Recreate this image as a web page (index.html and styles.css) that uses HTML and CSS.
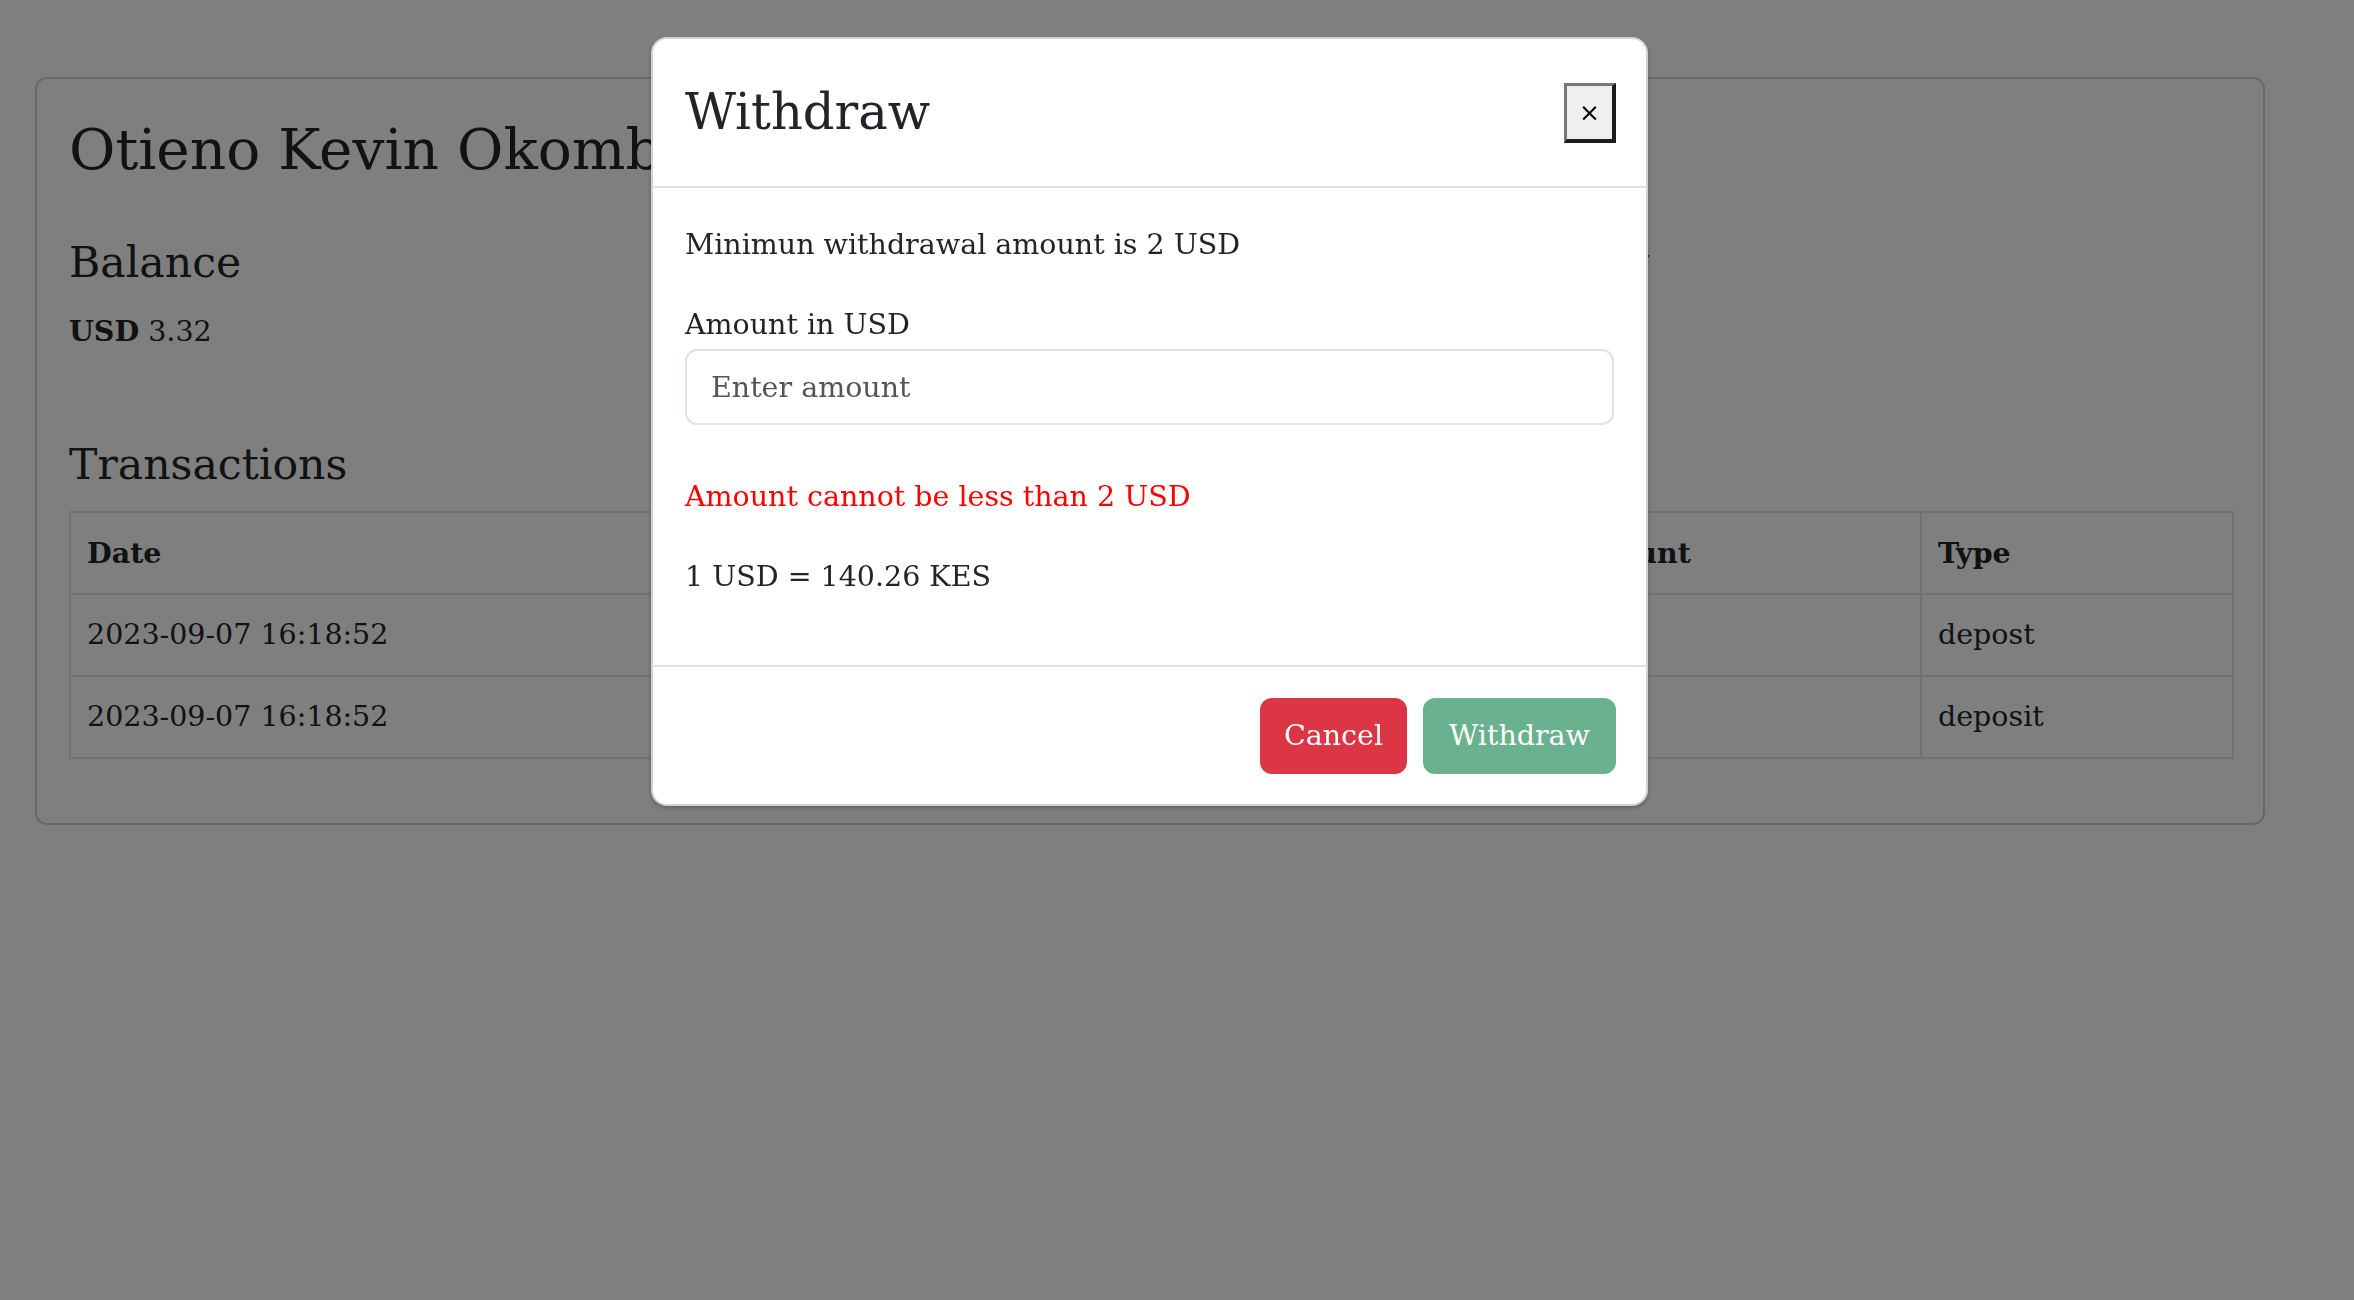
FILE: index.html
```html
<!DOCTYPE html>
<html lang="en">
<head>
<meta charset="utf-8">
<title>Wallet</title>
<link rel="stylesheet" href="styles.css">
</head>
<body>
<div class="page">
  <div class="card">
    <div class="card-body">
      <h2 class="name">Otieno Kevin Okombo</h2>
      <div class="summary">
        <div class="summary-col">
          <h4 class="section-title">Balance</h4>
          <p class="balance"><strong>USD</strong> 3.32</p>
        </div>
        <div class="summary-col summary-col-right">
          <h4 class="section-title">Withdraw money</h4>
        </div>
      </div>
      <h4 class="section-title tx-title">Transactions</h4>
      <table class="tx-table">
        <thead>
          <tr>
            <th class="c-date">Date</th>
            <th class="c-desc">Ref</th>
            <th class="c-ref">Status</th>
            <th class="c-amount">Amount</th>
            <th class="c-type">Type</th>
          </tr>
        </thead>
        <tbody>
          <tr>
            <td>2023-09-07 16:18:52</td>
            <td>R1</td>
            <td>ok</td>
            <td>1.66</td>
            <td>depost</td>
          </tr>
          <tr>
            <td>2023-09-07 16:18:52</td>
            <td>R2</td>
            <td>ok</td>
            <td>1.66</td>
            <td>deposit</td>
          </tr>
        </tbody>
      </table>
    </div>
  </div>
</div>

<div class="backdrop"></div>

<div class="modal">
  <div class="modal-header">
    <h3 class="modal-title">Withdraw</h3>
    <button class="close" type="button">×</button>
  </div>
  <div class="modal-body">
    <p class="text">Minimun withdrawal amount is 2 USD</p>
    <label class="label" for="amount">Amount in USD</label>
    <input class="input" id="amount" type="text" placeholder="Enter amount">
    <p class="text error">Amount cannot be less than 2 USD</p>
    <p class="text">1 USD = 140.26 KES</p>
  </div>
  <div class="modal-footer">
    <button class="btn btn-danger" type="button">Cancel</button>
    <button class="btn btn-success" type="button" disabled>Withdraw</button>
  </div>
</div>
</body>
</html>
```

FILE: styles.css
```css
* {
  box-sizing: border-box;
}

html, body {
  margin: 0;
  padding: 0;
}

body {
  background: #ffffff;
  color: #212529;
  font-family: "DejaVu Serif", "Liberation Serif", serif;
  font-size: 28.5px;
  line-height: 48px;
  width: 2354px;
  height: 1300px;
  overflow: hidden;
}

.page {
  padding: 77px 89px 0 35px;
}

.card {
  border: 2px solid rgba(0, 0, 0, 0.175);
  border-radius: 12px;
  background: #fff;
}

.card-body {
  padding: 32px;
}

.name {
  margin: 0 0 47px 0;
  font-size: 56.6px;
  line-height: 76px;
  font-weight: 400;
}

.summary {
  display: grid;
  grid-template-columns: 1105px 1fr;
}

.summary-col-right {
  padding-left: 108px;
}

.section-title {
  margin: 0 0 16px 0;
  font-size: 42.6px;
  line-height: 57px;
  font-weight: 400;
}

.balance {
  margin: 0 0 32px 0;
}

.balance strong {
  font-weight: 700;
}

.tx-title {
  margin-top: 48px;
  margin-bottom: 18px;
}

.tx-table {
  width: 100%;
  border-collapse: collapse;
  table-layout: fixed;
  margin-bottom: 32px;
}

.tx-table th,
.tx-table td {
  border: 2px solid #dee2e6;
  padding: 16px 16px;
  text-align: left;
  line-height: 48px;
  white-space: nowrap;
  overflow: hidden;
}

.tx-table th {
  font-weight: 700;
}

.c-date { width: 700px; }
.c-desc { width: 400px; }
.c-ref { width: 378px; }
.c-amount { width: 373px; }
.c-type { width: 312px; }

.backdrop {
  position: fixed;
  inset: 0;
  background: rgba(0, 0, 0, 0.5);
}

.modal {
  position: fixed;
  top: 37px;
  left: 651px;
  width: 997px;
  background: #fff;
  border: 2px solid rgba(0, 0, 0, 0.175);
  border-radius: 16px;
  box-shadow: 0 2px 4px rgba(0, 0, 0, 0.25);
}

.modal-header {
  display: flex;
  align-items: center;
  padding: 32px 30px 32px 32px;
  border-bottom: 2px solid #dee2e6;
}

.modal-title {
  margin: 0;
  font-size: 49.6px;
  line-height: 83px;
  font-weight: 400;
  flex: 1;
}

.close {
  width: 52px;
  height: 60px;
  padding: 0;
  background: #efefef;
  color: #000;
  border-style: solid;
  border-width: 3px 4px 4px 3px;
  border-color: #767676 #1c1c1c #1c1c1c #767676;
  border-radius: 0;
  font-family: "DejaVu Sans", sans-serif;
  font-size: 25px;
  line-height: 1;
}

.modal-body {
  padding: 33px 32px 32px 32px;
}

.text {
  margin: 0 0 32px 0;
}

.label {
  display: block;
}

.input {
  display: block;
  width: 100%;
  height: 76px;
  margin: 0 0 48px 0;
  padding: 12px 24px;
  border: 2px solid #dee2e6;
  border-radius: 12px;
  font-family: inherit;
  font-size: 28.5px;
  line-height: 48px;
  color: #212529;
  background: #fff;
  outline: none;
}

.input::placeholder {
  color: rgba(33, 37, 41, 0.78);
}

.error {
  color: #ff0000;
}

.modal-footer {
  display: flex;
  justify-content: flex-end;
  align-items: center;
  gap: 16px;
  padding: 31px 30px 30px 32px;
  border-top: 2px solid #dee2e6;
}

.btn {
  height: 76px;
  padding: 12px 22px;
  border: 2px solid transparent;
  border-radius: 12px;
  font-family: inherit;
  font-size: 28.5px;
  line-height: 48px;
  color: #fff;
}

.btn-danger {
  background: #dc3545;
  border-color: #dc3545;
}

.btn-success {
  background: #198754;
  border-color: #198754;
  opacity: 0.65;
  padding: 12px 24px;
}
```
